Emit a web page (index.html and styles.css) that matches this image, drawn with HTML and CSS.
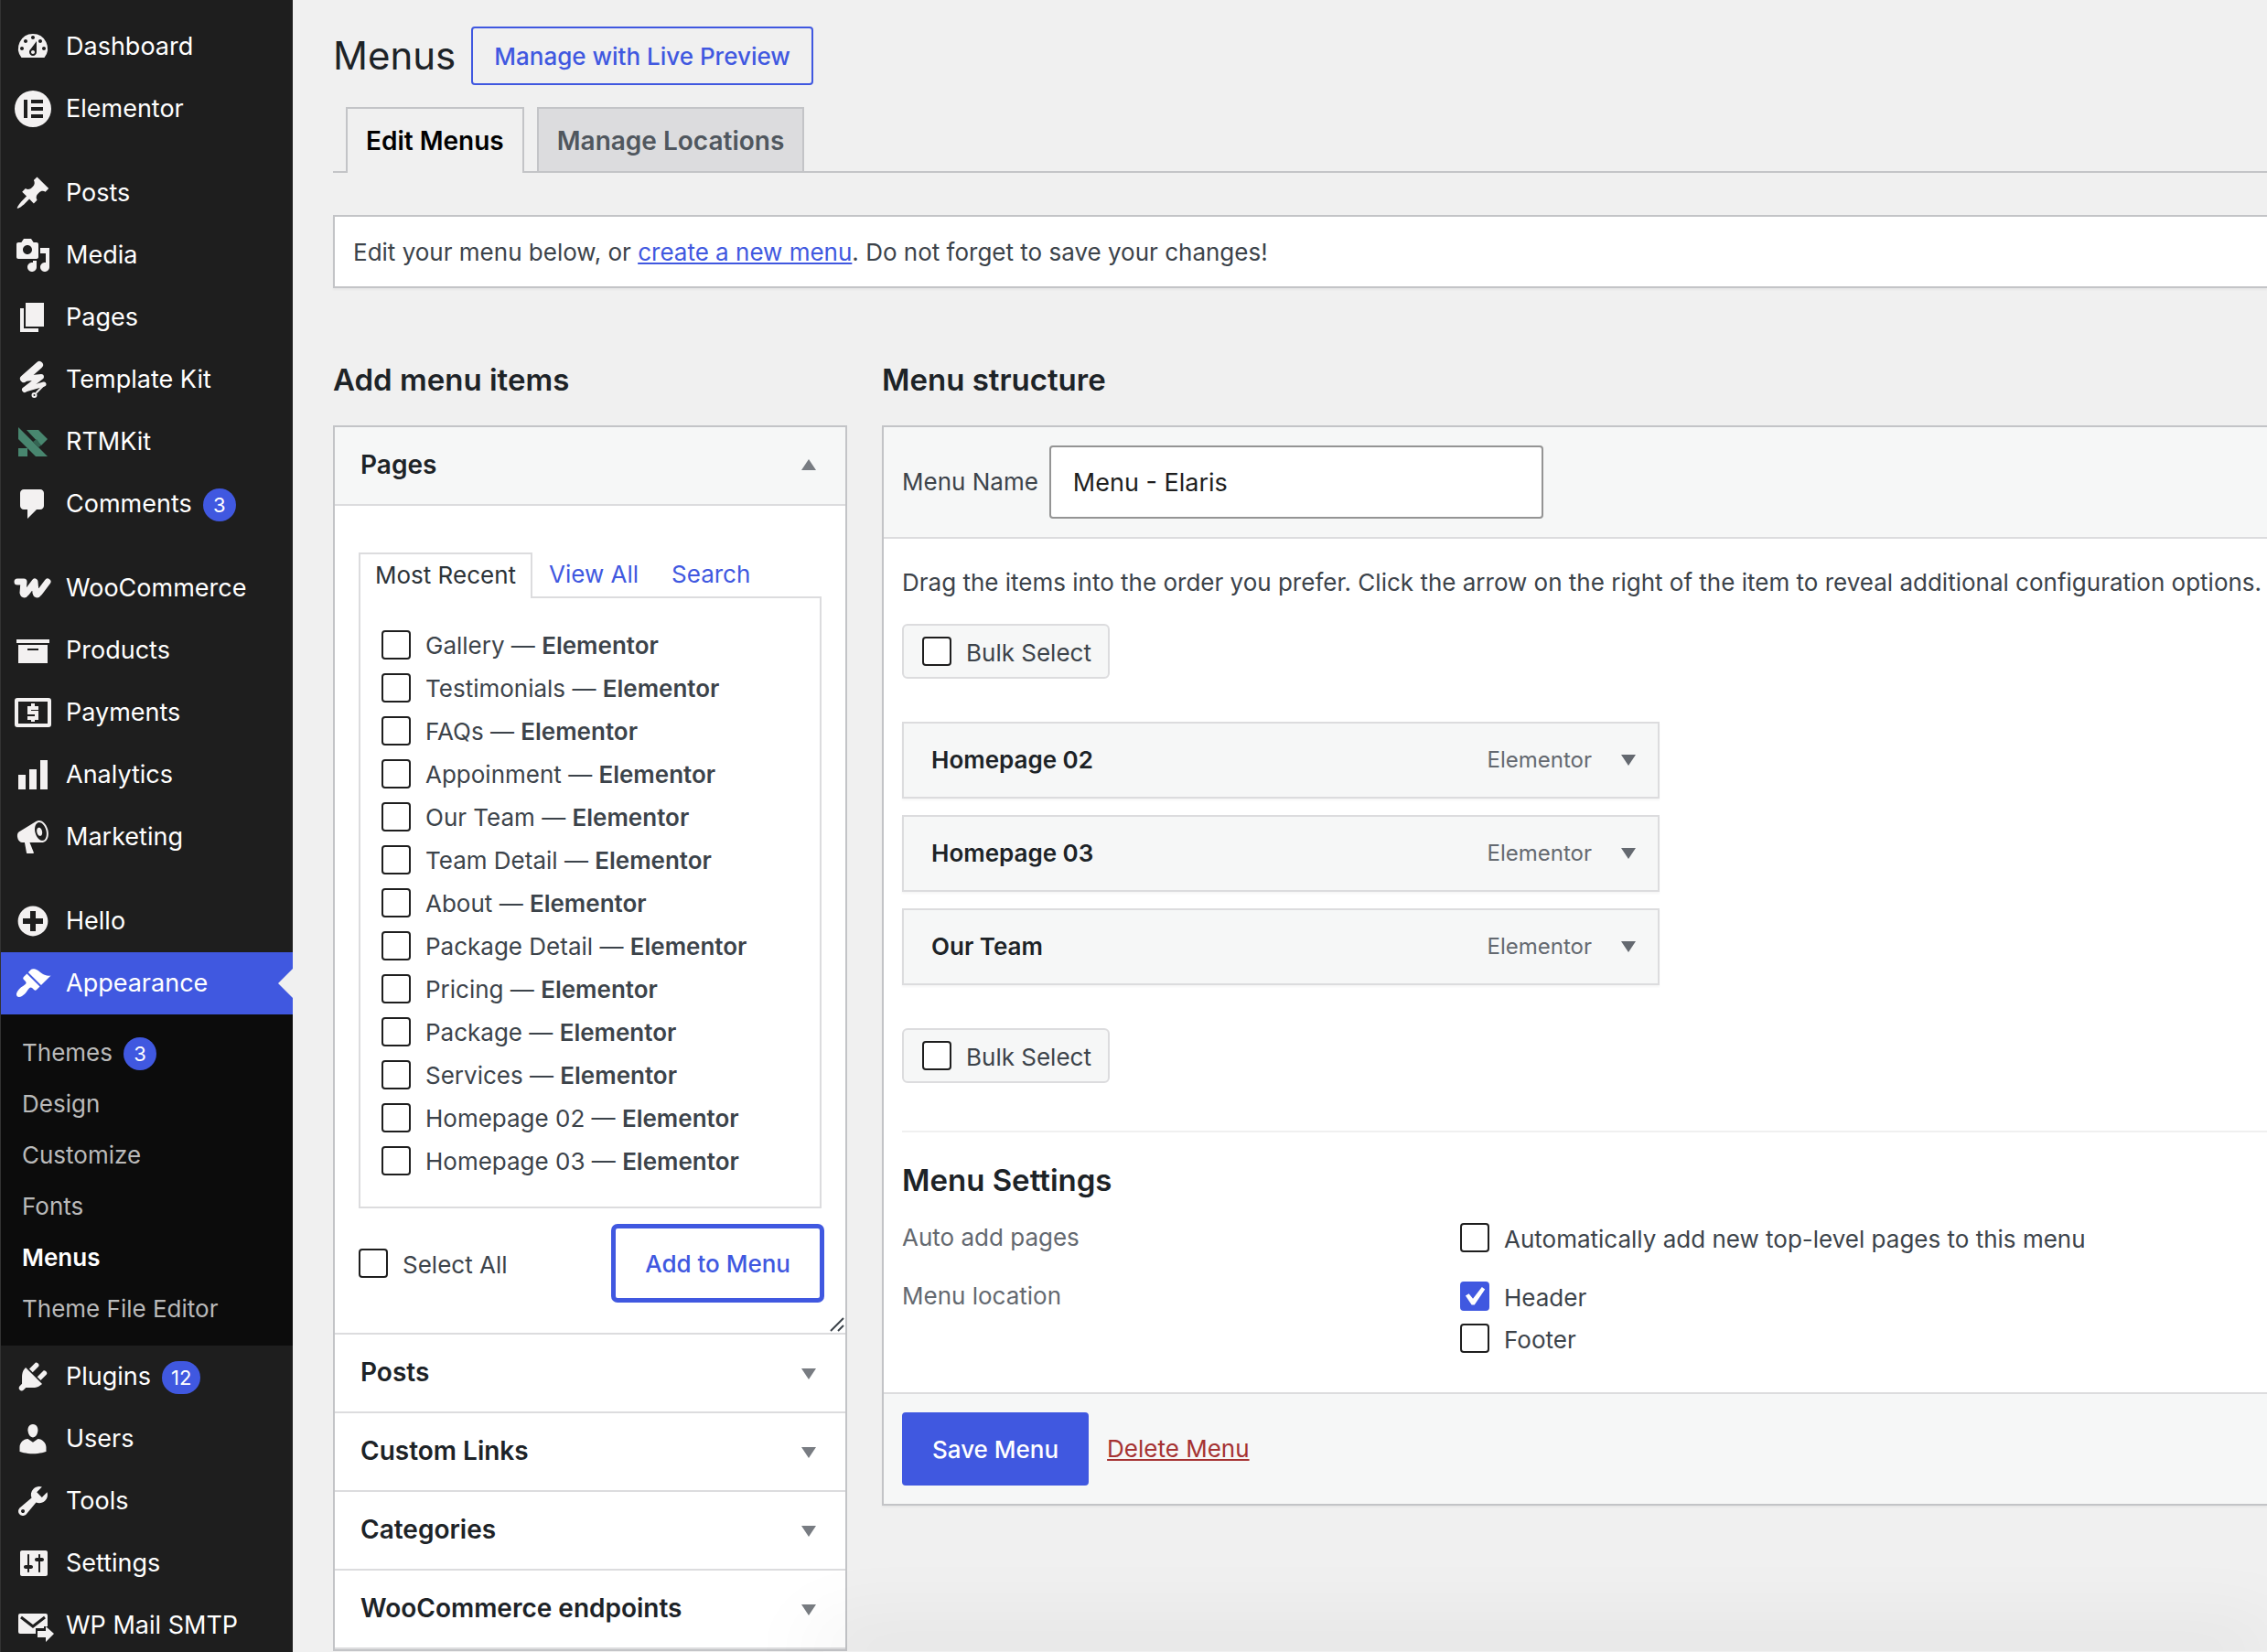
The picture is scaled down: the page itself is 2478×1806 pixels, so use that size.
FILE: index.html
```html
<!DOCTYPE html>
<html lang="en">
<head>
  <meta charset="UTF-8">
  <title>Menus</title>
  <meta name="viewport" content="width=device-width, initial-scale=1.0">
  <link rel="stylesheet" href="styles.css">
</head>
<body>

<div class="wrap">

  <!-- Admin sidebar -->
  <nav class="adminmenu">
    <ul class="menu-group">
      <li><a href="#" class="menu-top">
        <svg class="icon" viewBox="0 0 20 20"><path d="M3.76 16h12.48A7.998 7.998 0 0 0 10 3a7.998 7.998 0 0 0-6.24 13zM10 4c.55 0 1 .45 1 1s-.45 1-1 1-1-.45-1-1 .45-1 1-1zM6 6c.55 0 1 .45 1 1s-.45 1-1 1-1-.45-1-1 .45-1 1-1zm8 0c.55 0 1 .45 1 1s-.45 1-1 1-1-.45-1-1 .45-1 1-1zm-5.37 5.55L12 7v6c0 1.1-.9 2-2 2s-2-.9-2-2c0-.57.24-1.08.63-1.45zM4 10c.55 0 1 .45 1 1s-.45 1-1 1-1-.45-1-1 .45-1 1-1zm12 0c.55 0 1 .45 1 1s-.45 1-1 1-1-.45-1-1 .45-1 1-1zm-5 3c0-.55-.45-1-1-1s-1 .45-1 1 .45 1 1 1 1-.45 1-1z"/></svg>
        Dashboard</a></li>
      <li><a href="#" class="menu-top">
        <svg class="icon" viewBox="0 0 40 40"><path fill-rule="evenodd" d="M20 0a20 20 0 1 0 0 40a20 20 0 1 0 0-40zM10 10h4v20h-4zM18 10h13v4H18zM18 18h13v4H18zM18 26h13v4H18z"/></svg>
        Elementor</a></li>
    </ul>
    <ul class="menu-group">
      <li><a href="#" class="menu-top">
        <svg class="icon" viewBox="0 0 20 20"><path d="M10.44 3.02l1.82-1.82 6.36 6.35-1.83 1.82c-1.05-.68-2.48-.57-3.41.36l-.75.75c-.92.93-1.04 2.35-.35 3.41l-1.83 1.82-2.41-2.41-2.8 2.79c-.42.42-3.38 2.71-3.8 2.29s1.86-3.39 2.28-3.81l2.79-2.79L4.1 9.36l1.83-1.82c1.05.69 2.48.57 3.4-.36l.75-.75c.93-.92 1.05-2.35.36-3.41z"/></svg>
        Posts</a></li>
      <li><a href="#" class="menu-top">
        <svg class="icon" viewBox="0 0 20 20"><path d="M13 11V4c0-.55-.45-1-1-1h-1.67L9 1H5L3.67 3H2c-.55 0-1 .45-1 1v7c0 .55.45 1 1 1h10c.55 0 1-.45 1-1zM7 4.5c1.38 0 2.5 1.12 2.5 2.5S8.38 9.5 7 9.5 4.5 8.38 4.5 7 5.62 4.5 7 4.5zM14 6h5v10.5c0 1.38-1.12 2.5-2.5 2.5S14 17.88 14 16.5s1.12-2.5 2.5-2.5c.17 0 .34.02.5.05V9h-3V6zm-4 8.05V13h2v3.5c0 1.38-1.12 2.5-2.5 2.5S7 17.88 7 16.5 8.12 14 9.5 14c.17 0 .34.02.5.05z"/></svg>
        Media</a></li>
      <li><a href="#" class="menu-top">
        <svg class="icon" viewBox="0 0 20 20"><path d="M6 15V2h10v13H6zm-1 1h8v2H3V5h2v11z"/></svg>
        Pages</a></li>
      <li><a href="#" class="menu-top">
        <svg class="icon icon-line" viewBox="0 0 40 40"><path stroke-width="8" d="M27 4L10 19"/><path stroke-width="6" d="M10 19L29 17L11 31"/><path stroke-width="5" d="M11 31L32 25"/><path stroke-width="2" d="M32 26L24 34"/><circle cx="21.500" cy="37" r="1"/></svg>
        Template Kit</a></li>
      <li><a href="#" class="menu-top">
        <svg class="icon icon-rtm" viewBox="0 0 40 40"><path d="M4 4L36 36H23L4 17zM13 7H26L36 17L29 24zM4 27H14V36H4z"/><path fill="#346553" d="M24 17L29 24L26 26L20 20z"/></svg>
        RTMKit</a></li>
      <li><a href="#" class="menu-top">
        <svg class="icon" viewBox="0 0 20 20"><path d="M5 2h9c1.100 0 2 .9 2 2v7c0 1.100-.9 2-2 2h-2l-5 5v-5H5c-1.100 0-2-.9-2-2V4c0-1.100.9-2 2-2z"/></svg>
        Comments <span class="count">3</span></a></li>
    </ul>
    <ul class="menu-group">
      <li><a href="#" class="menu-top">
        <svg class="icon icon-line" viewBox="0 0 40 40"><path stroke-width="7" d="M3 13H10L9 25Q10 29 13 25L22 13L23 25Q24 29 27 25L36 13"/></svg>
        WooCommerce</a></li>
      <li><a href="#" class="menu-top">
        <svg class="icon" viewBox="0 0 20 20"><path d="M19 4v2H1V4h18zM2 7h16v10H2V7zm11 3V9H7v1h6z"/></svg>
        Products</a></li>
      <li><a href="#" class="menu-top">
        <svg class="icon icon-pay" viewBox="0 0 40 40"><rect x="2" y="6" width="36" height="28" rx="1"/><path d="M26 15H16V20H24V26H14M20 10V15M20 26V30"/></svg>
        Payments</a></li>
      <li><a href="#" class="menu-top">
        <svg class="icon" viewBox="0 0 20 20"><path d="M18 18V2h-4v16h4zm-6 0V7H8v11h4zm-6 0v-8H2v8h4z"/></svg>
        Analytics</a></li>
      <li><a href="#" class="menu-top">
        <svg class="icon" viewBox="0 0 20 20"><path d="M18.150 5.940c.46 1.620.38 3.220-.02 4.480-.42 1.280-1.260 2.180-2.300 2.480-.16.06-.26.06-.4.06-.06.02-.12.02-.18.02-.06.02-.14.02-.22.02h-6.800l2.220 5.500c.02.14-.06.26-.14.34-.08.1-.24.16-.34.16H6.950c-.1 0-.26-.06-.34-.16-.08-.08-.16-.2-.14-.34l-1-5.500H4.250l-.02-.02c-.5.06-1.080-.18-1.540-.62s-.88-1.080-1.060-1.880c-.24-.8-.2-1.560-.02-2.200.18-.62.58-1.080 1.060-1.300l.02-.02 9-5.400c.1-.06.18-.1.24-.16.06-.04.14-.08.24-.12.16-.08.28-.12.5-.18 1.040-.3 2.240.1 3.220.98s1.840 2.240 2.260 3.860zm-2.580 5.980h-.02c.4-.1.74-.34 1.040-.7.58-.7.86-1.760.86-3.040 0-.64-.1-1.300-.28-1.980-.34-1.360-1.020-2.500-1.780-3.240s-1.680-1.100-2.460-.88c-.82.22-1.400.96-1.700 2-.32 1.040-.28 2.360.06 3.720.38 1.360 1 2.500 1.800 3.240.78.74 1.620 1.100 2.480.88zm-2.540-7.080c.22-.04.42-.02.62.04.38.16.76.48 1.020 1s.42 1.200.42 1.780c0 .3-.04.56-.12.8-.18.48-.44.84-.86.94-.34.1-.8-.06-1.140-.4s-.64-.86-.78-1.500c-.18-.62-.12-1.240.02-1.720s.48-.84.82-.94z"/></svg>
        Marketing</a></li>
    </ul>
    <ul class="menu-group last">
      <li><a href="#" class="menu-top">
        <svg class="icon" viewBox="0 0 20 20"><path d="M15.800 4.200c3.200 3.210 3.200 8.390 0 11.600-3.210 3.200-8.390 3.200-11.600 0C1 12.590 1 7.410 4.200 4.200 7.410 1 12.590 1 15.800 4.200zm-4.300 11.300v-4h4v-3h-4v-4h-3v4h-4v3h4v4h3z"/></svg>
        Hello</a></li>
      <li>
        <a href="#" class="menu-top current">
        <svg class="icon" viewBox="0 0 20 20"><path d="M14.480 11.060L7.410 3.990l1.500-1.500c.5-.56 2.300-.47 3.510.32 1.210.8 1.430 1.280 2.910 2.100 1.180.64 2.450 1.260 4.450.85zm-.71.71L6.700 4.700 4.930 6.470c-.39.39-.39 1.020 0 1.410l1.060 1.060c.39.39.39 1.030 0 1.420-.6.6-1.430 1.110-2.210 1.690-.35.26-.7.53-1.010.84C1.430 14.230.4 16.080 1.400 17.070c.99 1 2.840-.03 4.180-1.360.31-.31.58-.66.85-1.020.57-.78 1.080-1.610 1.690-2.210.39-.39 1.020-.39 1.410 0l1.060 1.060c.39.39 1.020.39 1.410 0z"/></svg>
        Appearance</a>
        <ul class="submenu">
          <li><a href="#">Themes <span class="count">3</span></a></li>
          <li><a href="#">Design</a></li>
          <li><a href="#">Customize</a></li>
          <li><a href="#">Fonts</a></li>
          <li><a href="#" class="active">Menus</a></li>
          <li><a href="#">Theme File Editor</a></li>
        </ul>
      </li>
      <li><a href="#" class="menu-top">
        <svg class="icon" viewBox="0 0 20 20"><path d="M13.110 4.360L9.870 7.600 8 5.730l3.240-3.240c.35-.34 1.050-.2 1.560.32.52.51.66 1.210.31 1.550zm-8 1.770l.91-1.120 9.010 9.010-1.190.84c-.71.71-2.630 1.160-3.820 1.160H6.140L4.900 17.260c-.59.59-1.540.59-2.120 0-.59-.58-.59-1.530 0-2.120l1.240-1.240v-3.880c0-1.130.4-3.190 1.090-3.890zm7.260 3.970l3.240-3.240c.34-.35 1.040-.21 1.550.31.52.51.66 1.210.31 1.550l-3.240 3.250z"/></svg>
        Plugins <span class="count">12</span></a></li>
      <li><a href="#" class="menu-top">
        <svg class="icon" viewBox="0 0 20 20"><path d="M10 9.250c-2.270 0-2.730-3.440-2.730-3.440C7 4.020 7.820 2 9.970 2c2.160 0 2.980 2.020 2.710 3.810 0 0-.41 3.440-2.680 3.440zm0 2.570L12.720 10c2.390 0 4.520 2.330 4.520 4.530v2.490s-3.650 1.130-7.240 1.130c-3.650 0-7.240-1.130-7.240-1.130v-2.490c0-2.250 1.940-4.480 4.470-4.480z"/></svg>
        Users</a></li>
      <li><a href="#" class="menu-top">
        <svg class="icon" viewBox="0 0 20 20"><path d="M16.680 9.770c-1.340 1.340-3.300 1.670-4.950.99l-5.410 6.520c-.99.99-2.590.99-3.580 0s-.99-2.590 0-3.570l6.520-5.420c-.68-1.650-.35-3.610.99-4.950 1.280-1.280 3.120-1.620 4.720-1.060l-2.890 2.890 2.820 2.820 2.860-2.870c.53 1.580.18 3.390-1.080 4.650zM3.810 16.210c.4.39 1.040.39 1.430 0 .4-.4.4-1.040 0-1.430-.39-.4-1.030-.4-1.430 0-.39.39-.39 1.030 0 1.430z"/></svg>
        Tools</a></li>
      <li><a href="#" class="menu-top">
        <svg class="icon" viewBox="0 0 20 20"><path d="M18 16V4c0-.55-.45-1-1-1H4c-.55 0-1 .45-1 1v12c0 .55.45 1 1 1h13c.55 0 1-.45 1-1zM8 11h1c.55 0 1 .45 1 1s-.45 1-1 1H8v1.500c0 .28-.22.5-.5.5s-.5-.22-.5-.5V13H6c-.55 0-1-.45-1-1s.45-1 1-1h1V5.500c0-.28.22-.5.5-.5s.5.22.5.5V11zm5-2h-1c-.55 0-1-.45-1-1s.45-1 1-1h1V5.500c0-.28.22-.5.5-.5s.5.22.5.5V7h1c.55 0 1 .45 1 1s-.45 1-1 1h-1v5.500c0 .28-.22.5-.5.5s-.5-.22-.5-.5V9z"/></svg>
        Settings</a></li>
      <li><a href="#" class="menu-top">
        <svg class="icon icon-mail" viewBox="0 0 40 40"><path d="M6 7H34Q36 7 36 9V21H32V23H23V29H6Q4 29 4 27V9Q4 7 6 7z"/><path class="flap" d="M7 11L20 21L33 11"/><path d="M25 26H34V21L43 29L34 38V33H25z"/></svg>
        WP Mail SMTP</a></li>
    </ul>
  </nav>

  <!-- Content -->
  <main class="content">
    <div class="page-head">
      <h1>Menus</h1>
      <a href="#" class="page-title-action">Manage with Live Preview</a>
    </div>

    <div class="nav-tabs">
      <a href="#" class="nav-tab nav-tab-active">Edit Menus</a>
      <a href="#" class="nav-tab">Manage Locations</a>
    </div>

    <div class="manage-menus">Edit your menu below, or <a href="#">create a new menu</a>. Do not forget to save your changes!</div>

    <div class="columns">

      <section class="add-items">
        <h2>Add menu items</h2>
        <div class="accordion">
          <button type="button" class="accordion-title open">Pages <span class="arrow up"></span></button>
          <div class="accordion-body">
            <div class="tabs">
              <a href="#" class="tab selected">Most Recent</a>
              <a href="#" class="tab">View All</a>
              <a href="#" class="tab">Search</a>
            </div>
            <div class="tabs-panel">
              <label class="check"><input type="checkbox"><span>Gallery — <b>Elementor</b></span></label>
              <label class="check"><input type="checkbox"><span>Testimonials — <b>Elementor</b></span></label>
              <label class="check"><input type="checkbox"><span>FAQs — <b>Elementor</b></span></label>
              <label class="check"><input type="checkbox"><span>Appoinment — <b>Elementor</b></span></label>
              <label class="check"><input type="checkbox"><span>Our Team — <b>Elementor</b></span></label>
              <label class="check"><input type="checkbox"><span>Team Detail — <b>Elementor</b></span></label>
              <label class="check"><input type="checkbox"><span>About — <b>Elementor</b></span></label>
              <label class="check"><input type="checkbox"><span>Package Detail — <b>Elementor</b></span></label>
              <label class="check"><input type="checkbox"><span>Pricing — <b>Elementor</b></span></label>
              <label class="check"><input type="checkbox"><span>Package — <b>Elementor</b></span></label>
              <label class="check"><input type="checkbox"><span>Services — <b>Elementor</b></span></label>
              <label class="check"><input type="checkbox"><span>Homepage 02 — <b>Elementor</b></span></label>
              <label class="check"><input type="checkbox"><span>Homepage 03 — <b>Elementor</b></span></label>
            </div>
            <div class="button-controls">
              <label class="check"><input type="checkbox"><span>Select All</span></label>
              <button type="button" class="btn btn-add">Add to Menu</button>
            </div>
            <svg class="resizer" viewBox="0 0 16 16"><path d="M1 15L15 1M9 15L15 9"/></svg>
          </div>
          <button type="button" class="accordion-title">Posts <span class="arrow"></span></button>
          <button type="button" class="accordion-title">Custom Links <span class="arrow"></span></button>
          <button type="button" class="accordion-title">Categories <span class="arrow"></span></button>
          <button type="button" class="accordion-title">WooCommerce endpoints <span class="arrow"></span></button>
        </div>
      </section>

      <section class="structure">
        <h2>Menu structure</h2>
        <form class="menu-edit">
          <div class="menu-edit-header">
            <label for="menu-name">Menu Name</label>
            <input type="text" id="menu-name" value="Menu - Elaris">
          </div>

          <div class="menu-edit-body">
            <p>Drag the items into the order you prefer. Click the arrow on the right of the item to reveal additional configuration options.</p>

            <label class="check bulk"><input type="checkbox"><span>Bulk Select</span></label>

            <ul class="menu-items">
              <li><b>Homepage 02</b><span class="type">Elementor</span><span class="arrow"></span></li>
              <li><b>Homepage 03</b><span class="type">Elementor</span><span class="arrow"></span></li>
              <li><b>Our Team</b><span class="type">Elementor</span><span class="arrow"></span></li>
            </ul>

            <label class="check bulk"><input type="checkbox"><span>Bulk Select</span></label>

            <div class="menu-settings">
              <h2>Menu Settings</h2>
              <div class="setting">
                <span class="setting-name">Auto add pages</span>
                <div class="setting-inputs">
                  <label class="check"><input type="checkbox"><span>Automatically add new top-level pages to this menu</span></label>
                </div>
              </div>
              <div class="setting">
                <span class="setting-name">Menu location</span>
                <div class="setting-inputs">
                  <label class="check"><input type="checkbox" checked><span>Header</span></label>
                  <label class="check"><input type="checkbox"><span>Footer</span></label>
                </div>
              </div>
            </div>
          </div>

          <div class="menu-edit-footer">
            <button type="button" class="btn btn-primary">Save Menu</button>
            <a href="#" class="delete">Delete Menu</a>
          </div>
        </form>
      </section>

    </div>
  </main>

</div>

<div class="bottom-shade"></div>

</body>
</html>
```
FILE: styles.css
```css
* {
  box-sizing: border-box;
}

body {
  margin: 0;
  background: #f0f0f0;
  color: #3c434a;
  font-family: Inter, "Liberation Sans", sans-serif;
  font-size: 26px;
  line-height: 40px;
}

ul {
  list-style: none;
  margin: 0;
  padding: 0;
}

a {
  color: #4058e0;
}

h1, h2 {
  margin: 0;
  color: #1d2327;
}

h1 {
  font-size: 42px;
  font-weight: 400;
  line-height: 64px;
}

h2 {
  font-size: 33px;
  font-weight: 600;
  line-height: 44px;
}

b {
  font-weight: 600;
}

button, input {
  font-family: inherit;
}

.wrap {
  display: flex;
  height: 100vh;
  overflow: hidden;
}

/* Sidebar */
.adminmenu {
  flex: 0 0 320px;
  padding-top: 17px;
  background: #1e1e1e;
  border-left: 1px solid #333;
}

.menu-group {
  margin-bottom: 24px;
}

.menu-top {
  display: flex;
  align-items: center;
  position: relative;
  height: 68px;
  padding-left: 15px;
  color: #fff;
  font-size: 27px;
  text-decoration: none;
}

.icon {
  width: 40px;
  height: 40px;
  margin-right: 16px;
  fill: #f3f1f1;
  overflow: visible;
}

.icon-line,
.icon-pay {
  fill: none;
  stroke: #f3f1f1;
  stroke-width: 4;
}

.icon-line {
  stroke-linecap: round;
  stroke-linejoin: round;
}

.icon-rtm {
  fill: #48866f;
}

.icon-mail .flap {
  fill: none;
  stroke: #1e1e1e;
  stroke-width: 3;
}

.count {
  min-width: 36px;
  height: 36px;
  margin-top: 2px;
  margin-left: 12px;
  padding: 0 10px;
  border-radius: 18px;
  background: #4058e0;
  color: #fff;
  font-size: 22px;
  line-height: 36px;
  text-align: center;
}

.current {
  background: #4058e0;
}

.current .icon {
  fill: #fff;
}

.current::after {
  content: "";
  position: absolute;
  right: 0;
  top: 18px;
  border: 16px solid transparent;
  border-left: 0;
  border-right-color: #f0f0f0;
}

.submenu {
  padding: 14px 0 12px;
  background: #0c0c0c;
}

.submenu a {
  display: flex;
  align-items: center;
  height: 56px;
  padding-left: 23px;
  color: #bababa;
  font-size: 26px;
  text-decoration: none;
}

.submenu .active {
  color: #fff;
  font-weight: 600;
}

/* Content */
.content {
  flex: 1;
  min-width: 0;
  padding: 29px 0 0 44px;
}

.page-head {
  display: flex;
  align-items: center;
  gap: 17px;
}

.page-title-action {
  height: 64px;
  padding: 0 23px;
  border: 2px solid #4058e0;
  border-radius: 4px;
  font-weight: 500;
  line-height: 62px;
  text-decoration: none;
}

.nav-tabs {
  display: flex;
  gap: 14px;
  margin-top: 24px;
  padding-left: 14px;
  border-bottom: 2px solid #c3c4c7;
}

.nav-tab {
  height: 70px;
  padding: 0 20px;
  border: 2px solid #c3c4c7;
  border-bottom: 0;
  background: #dcdcde;
  color: #50575e;
  font-size: 28px;
  font-weight: 600;
  line-height: 70px;
  text-decoration: none;
}

.nav-tab-active {
  height: 72px;
  margin-bottom: -2px;
  background: #f0f0f0;
  color: #000;
}

.manage-menus {
  margin-top: 46px;
  padding: 19px 20px 17px;
  border: 2px solid #c3c4c7;
  border-right: 0;
  background: #fff;
  box-shadow: 0 2px 2px rgba(0, 0, 0, 0.04);
}

.columns {
  display: flex;
  gap: 38px;
  margin-top: 78px;
}

.columns section > h2 {
  margin-bottom: 28px;
}

/* Add menu items */
.add-items {
  flex: 0 0 562px;
}

.accordion {
  border: 2px solid #c3c4c7;
  background: #fff;
}

.accordion-title {
  display: flex;
  align-items: center;
  justify-content: space-between;
  width: 100%;
  height: 86px;
  padding: 0 32px 2px 28px;
  border: 0;
  border-bottom: 2px solid #dcdcde;
  background: #fff;
  color: #1d2327;
  font-size: 28px;
  font-weight: 600;
}

.accordion-title.open {
  background: #f6f7f7;
}

.arrow {
  border: 8px solid transparent;
  border-top: 12px solid #787c82;
  border-bottom: 0;
}

.accordion-title .arrow {
  margin-top: 4px;
}

.accordion-title .arrow.up {
  margin-top: 0;
  border-top: 0;
  border-bottom: 12px solid #787c82;
}

.accordion-body {
  position: relative;
  padding: 51px 26px 36px;
  border-bottom: 2px solid #dcdcde;
}

.tabs {
  display: flex;
}

.tab {
  height: 48px;
  padding: 0 18px;
  line-height: 48px;
  text-decoration: none;
}

.tab.selected {
  height: 50px;
  margin-bottom: -2px;
  padding: 0 16px;
  position: relative;
  border: 2px solid #dcdcde;
  border-bottom: 0;
  background: #fff;
  color: #2c3338;
  line-height: 46px;
}

.tabs-panel {
  padding: 27px 23px;
  border: 2px solid #dcdcde;
}

.check {
  display: flex;
  align-items: center;
  height: 47px;
}

.check input {
  appearance: none;
  flex: none;
  width: 32px;
  height: 32px;
  margin: 0 16px 0 0;
  border: 2px solid #1e1e1e;
  border-radius: 4px;
  background: #fff;
}

.check span {
  padding-top: 3px;
}

.check input:checked {
  border-color: #4058e0;
  background: #4058e0;
}

.check input:checked::before {
  content: "";
  display: block;
  width: 28px;
  height: 28px;
  background: #fff;
  clip-path: polygon(78% 14%, 90% 23%, 49% 84%, 38% 84%, 14% 48%, 27% 40%, 43% 60%);
}

.button-controls {
  display: flex;
  align-items: center;
  justify-content: space-between;
  margin-top: 20px;
}

.btn {
  height: 80px;
  border: 2px solid #4058e0;
  border-radius: 4px;
  font-size: 26px;
  font-weight: 500;
}

.btn-add {
  padding: 0 32px;
  background: #fff;
  color: #4058e0;
  box-shadow: 0 0 0 3px #4058e0;
}

.btn-primary {
  padding: 0 31px;
  background: #4058e0;
  color: #fff;
}

.resizer {
  position: absolute;
  right: 1px;
  bottom: 1px;
  width: 16px;
  height: 16px;
  fill: none;
  stroke: #3c434a;
  stroke-width: 2;
}

/* Menu structure */
.structure {
  flex: 1;
  min-width: 0;
}

.menu-edit {
  border: 2px solid #c3c4c7;
  border-right: 0;
  background: #fff;
  box-shadow: 0 2px 2px rgba(0, 0, 0, 0.04);
}

.menu-edit-header,
.menu-edit-footer {
  display: flex;
  align-items: center;
  padding: 20px;
  background: #f6f7f7;
}

.menu-edit-header {
  gap: 12px;
  border-bottom: 2px solid #dcdcde;
}

.menu-edit-header input {
  width: 540px;
  height: 80px;
  padding: 0 24px;
  border: 2px solid #949494;
  border-radius: 4px;
  background: #fff;
  color: #1e1e1e;
  font-size: 27px;
}

.menu-edit-body {
  padding: 28px 0 18px 20px;
}

.menu-edit-body p {
  margin: 0 0 25px;
  white-space: nowrap;
}

.bulk {
  width: max-content;
  height: 60px;
  padding: 0 18px 0 20px;
  border: 2px solid #dcdcde;
  border-radius: 6px;
  background: #f6f7f7;
}

.menu-items {
  display: flex;
  flex-direction: column;
  gap: 18px;
  width: 828px;
  margin: 47px 0;
}

.menu-items li {
  display: flex;
  align-items: center;
  height: 84px;
  padding: 0 24px 0 30px;
  border: 2px solid #dcdcde;
  background: #f6f7f7;
  color: #1d2327;
  box-shadow: 0 2px 2px rgba(0, 0, 0, 0.04);
}

.menu-items .type {
  margin-left: auto;
  margin-right: 32px;
  color: #646970;
  font-size: 24px;
}

.menu-items .arrow {
  border-top-color: #646970;
}

.menu-settings {
  margin-top: 52px;
  padding-top: 30px;
  border-top: 2px solid #f0f0f0;
}

.menu-settings h2 {
  margin-bottom: 18px;
}

.setting {
  display: flex;
  margin-bottom: 18px;
}

.setting-name {
  flex: 0 0 610px;
  padding-top: 3px;
  color: #646970;
}

.setting .check {
  height: 46px;
}

.menu-edit-footer {
  gap: 20px;
  border-top: 2px solid #dcdcde;
}

.delete {
  color: #a53232;
}

/* Soft shade along the window's lower edge */
.bottom-shade {
  position: fixed;
  left: 900px;
  right: 0;
  bottom: 0;
  height: 1px;
  box-shadow: 0 0 90px 10px rgba(0, 0, 0, 0.16);
}
```
